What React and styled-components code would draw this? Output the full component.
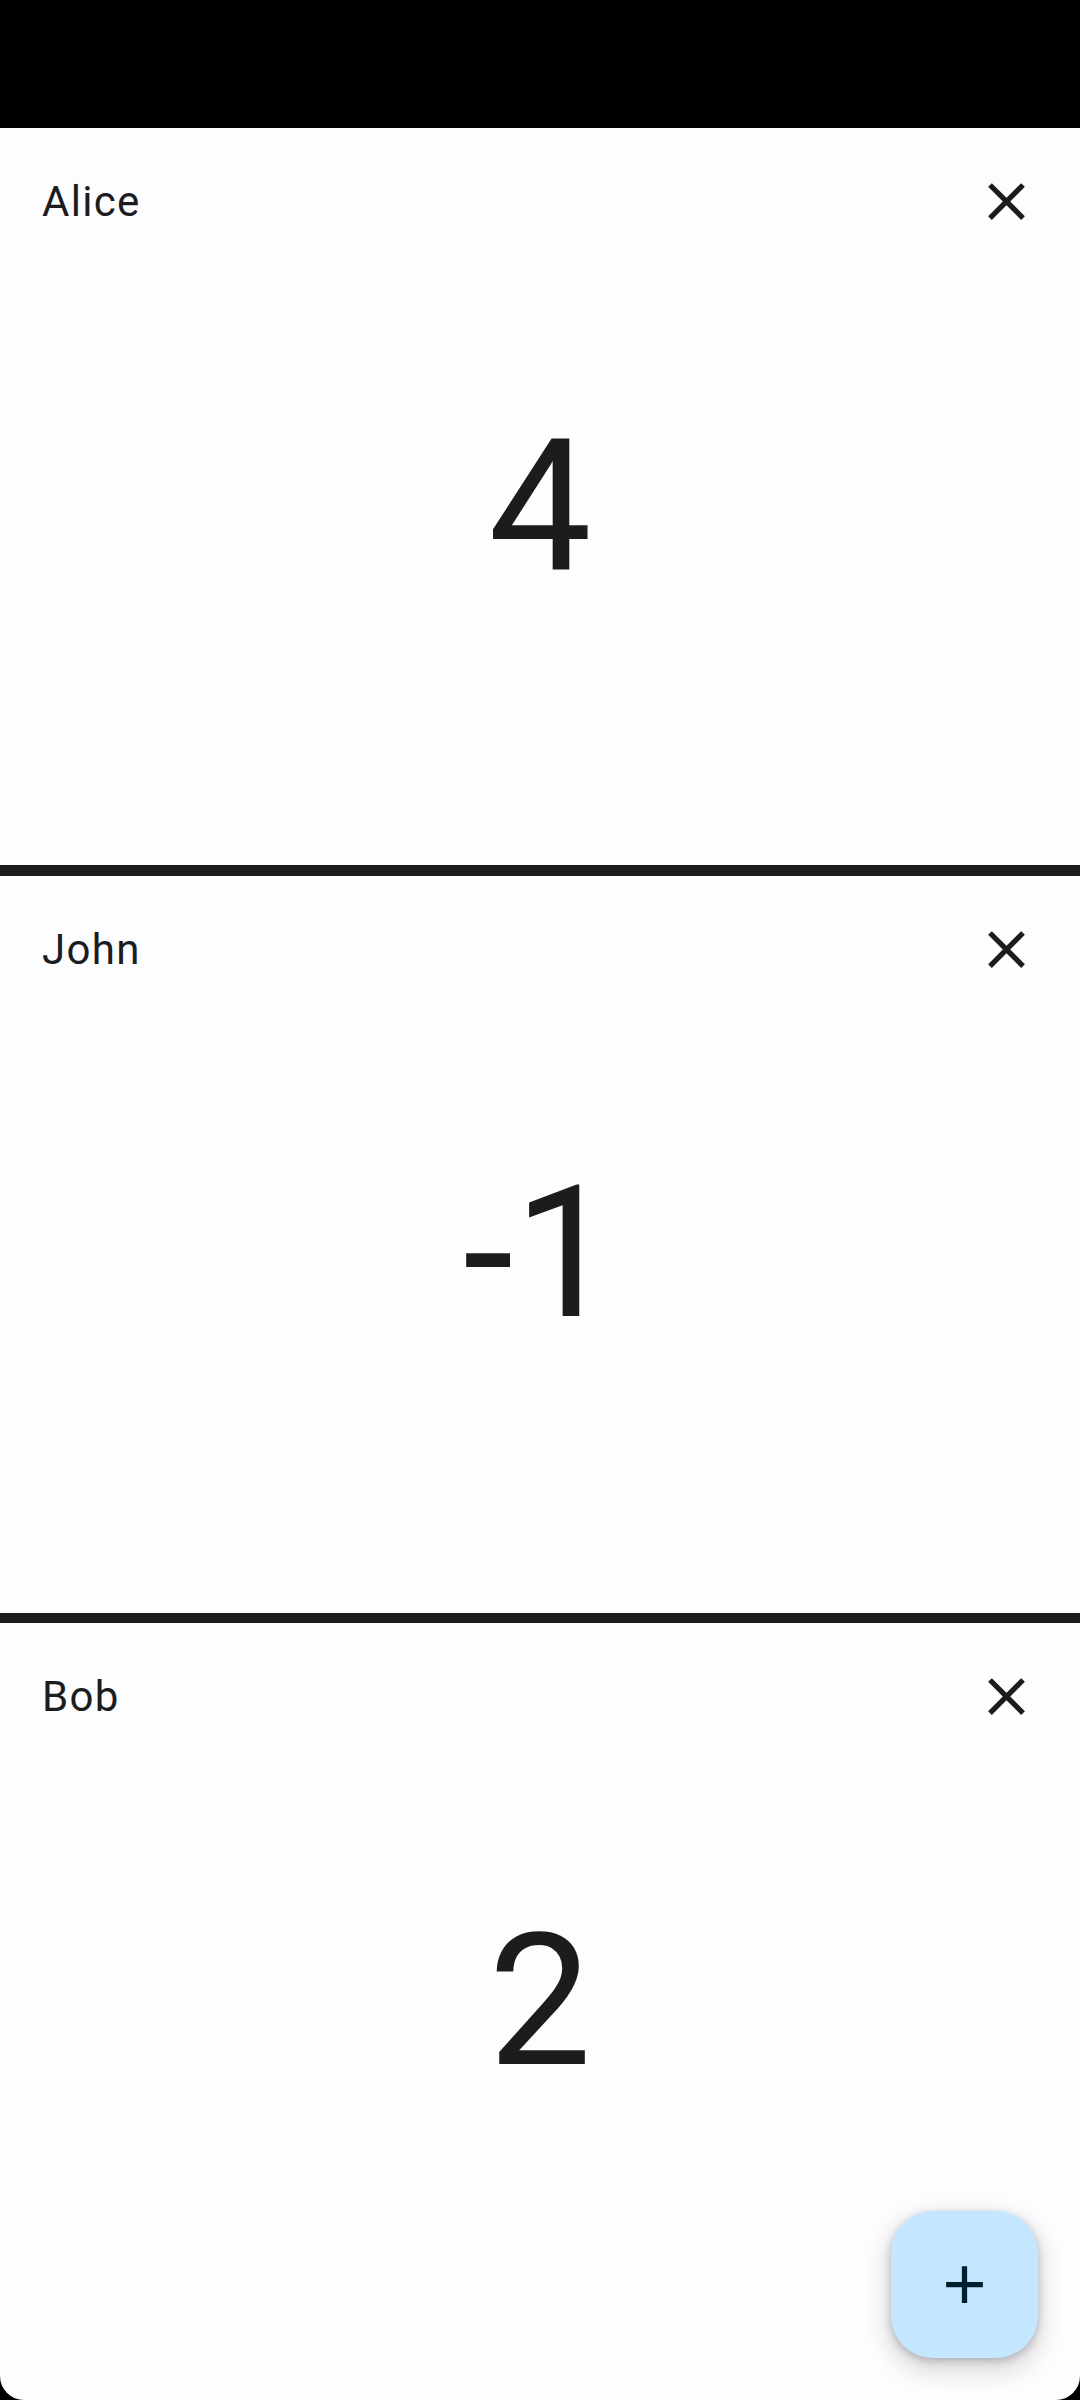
import React from "react";
import styled, { createGlobalStyle } from "styled-components";

const GlobalStyle = createGlobalStyle`
  html, body {
    margin: 0;
    padding: 0;
    background: #000000;
  }
  * { box-sizing: border-box; }
  body {
    font-family: Roboto, "Noto Sans", "Liberation Sans", sans-serif;
  }
`;

const Screen = styled.div`
  position: relative;
  width: 1080px;
  height: 2400px;
  display: flex;
  flex-direction: column;
  overflow: hidden;
  background: #000000;
`;

const StatusBar = styled.div`
  height: 128px;
  flex: none;
  background: #000000;
`;

const Body = styled.main`
  flex: 1;
  display: flex;
  flex-direction: column;
  background: #fdfcff;
  padding-bottom: 40px;
  border-radius: 0 0 24px 24px;
`;

const Card = styled.section`
  flex: 1;
  min-height: 0;
  display: flex;
  flex-direction: column;
`;

const Header = styled.div`
  height: 147px;
  flex: none;
  display: flex;
  align-items: center;
  justify-content: space-between;
  padding: 0 42px;
`;

const Name = styled.span`
  font-family: Roboto, "Noto Sans", sans-serif;
  font-size: 42px;
  font-weight: 400;
  line-height: 63px;
  letter-spacing: 1.3px;
  color: #1a1c1e;
`;

const IconButton = styled.button`
  width: 63px;
  height: 63px;
  padding: 0;
  border: none;
  background: transparent;
  display: flex;
  align-items: center;
  justify-content: center;
  color: #1a1c1e;
  cursor: pointer;
`;

const ValueArea = styled.div`
  flex: 1;
  display: flex;
  align-items: center;
  justify-content: center;
  padding-bottom: 129px;
`;

const Value = styled.span`
  font-family: Roboto, "Noto Sans", sans-serif;
  font-size: 184px;
  font-weight: 400;
  line-height: 1;
  color: #1a1c1e;
`;

const Divider = styled.div`
  height: 10.5px;
  flex: none;
  background: #1a1c1e;
`;

const Fab = styled.button`
  position: absolute;
  right: 42px;
  bottom: 42px;
  width: 147px;
  height: 147px;
  border: none;
  border-radius: 42px;
  background: #c4e7ff;
  color: #001e2c;
  display: flex;
  align-items: center;
  justify-content: center;
  box-shadow: 0 3px 8px rgba(0, 0, 0, 0.22), 0 10px 22px 6px rgba(0, 0, 0, 0.12);
  cursor: pointer;
`;

const CloseIcon = () => (
  <svg width="63" height="63" viewBox="0 0 24 24" fill="currentColor">
    <path d="M19 6.41L17.59 5 12 10.59 6.41 5 5 6.41 10.59 12 5 17.59 6.41 19 12 13.41 17.59 19 19 17.59 13.41 12z" />
  </svg>
);

const AddIcon = () => (
  <svg width="63" height="63" viewBox="0 0 24 24" fill="currentColor">
    <path d="M19 13h-6v6h-2v-6H5v-2h6V5h2v6h6v2z" />
  </svg>
);

const players = [
  { name: "Alice", score: 4 },
  { name: "John", score: -1 },
  { name: "Bob", score: 2 },
];

export default function App() {
  return (
    <>
      <GlobalStyle />
      <Screen>
        <StatusBar />
        <Body>
          {players.map((p, i) => (
            <React.Fragment key={p.name}>
              {i > 0 && <Divider />}
              <Card>
                <Header>
                  <Name>{p.name}</Name>
                  <IconButton aria-label="Remove">
                    <CloseIcon />
                  </IconButton>
                </Header>
                <ValueArea>
                  <Value>{p.score}</Value>
                </ValueArea>
              </Card>
            </React.Fragment>
          ))}
        </Body>
        <Fab aria-label="Add">
          <AddIcon />
        </Fab>
      </Screen>
    </>
  );
}
